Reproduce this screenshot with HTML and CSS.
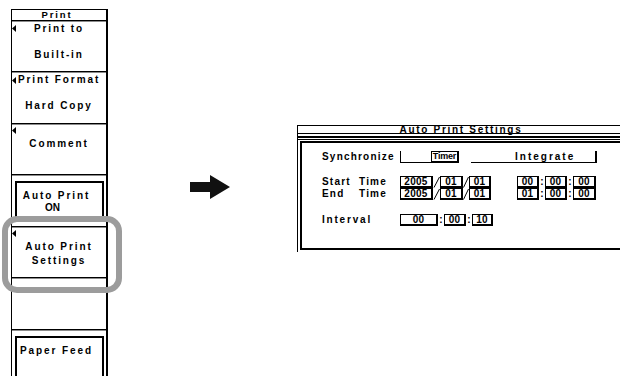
FILE: index.html
```html
<!DOCTYPE html>
<html>
<head>
<meta charset="utf-8">
<title>Auto Print Settings</title>
<link rel="stylesheet" href="styles.css">
</head>
<body>
<div class="page">
  <div class="menu">
    <div class="menu-title">Print</div>
    <div class="soft">
      <div class="l1"><svg class="tri" width="5" height="7" viewBox="0 0 5 7"><polygon points="0,3.5 4,0 4,7"/></svg><span>Print to</span></div>
      <div class="l2">Built-in</div>
    </div>
    <div class="soft">
      <div class="l1"><svg class="tri" width="5" height="7" viewBox="0 0 5 7"><polygon points="0,3.5 4,0 4,7"/></svg><span>Print Format</span></div>
      <div class="l2">Hard Copy</div>
    </div>
    <div class="soft marked">
      <svg class="tri" width="5" height="7" viewBox="0 0 5 7"><polygon points="0,3.5 4,0 4,7"/></svg>
      <div class="lbl">Comment</div>
    </div>
    <div class="soft">
      <div class="raised"><div>Auto Print</div><div class="on">ON</div></div>
    </div>
    <div class="soft marked">
      <svg class="tri" width="5" height="7" viewBox="0 0 5 7"><polygon points="0,3.5 4,0 4,7"/></svg>
      <div class="lbl">Auto Print</div>
      <div class="lbl second">Settings</div>
    </div>
    <div class="soft"></div>
    <div class="soft">
      <div class="raised tall"><div>Paper Feed</div></div>
    </div>
  </div>

  <svg class="arrow" width="40" height="24" viewBox="0 0 40 24"><polygon points="0,7 20,7 20,0 40,12 20,24 20,17 0,17"/></svg>

  <div class="dialog">
    <div class="dlg-title">Auto Print Settings</div>
    <div class="dlg-rule"></div>
    <div class="dlg-body">
      <div class="row">
        <span class="label">Synchronize</span>
        <span class="opt-left"></span><span class="opt-sel">Timer</span>
        <span class="opt-right">Integrate</span>
      </div>
      <div class="times">
        <div class="row">
          <span class="label"><span class="word">Start</span>Time</span>
          <span class="f w33">2005</span><svg class="slash" width="7" height="12" viewBox="0 0 7 12"><line x1="1" y1="11.5" x2="6.5" y2="1"/></svg><span class="f w23">01</span><svg class="slash" width="6" height="12" viewBox="0 0 6 12"><line x1="0.5" y1="11.5" x2="5.5" y2="1"/></svg><span class="f w22">01</span>
          <span class="f w22 gap">00</span><span class="colon">:</span><span class="f w22">00</span><span class="colon">:</span><span class="f w23">00</span>
        </div>
        <div class="row">
          <span class="label"><span class="word">End</span>Time</span>
          <span class="f w33">2005</span><svg class="slash" width="7" height="12" viewBox="0 0 7 12"><line x1="1" y1="11.5" x2="6.5" y2="1"/></svg><span class="f w23">01</span><svg class="slash" width="6" height="12" viewBox="0 0 6 12"><line x1="0.5" y1="11.5" x2="5.5" y2="1"/></svg><span class="f w22">01</span>
          <span class="f w22 gap">01</span><span class="colon">:</span><span class="f w22">00</span><span class="colon">:</span><span class="f w23">00</span>
        </div>
      </div>
      <div class="row interval">
        <span class="label">Interval</span>
        <span class="f w38">00</span><span class="colon">:</span><span class="f w22">00</span><span class="colon">:</span><span class="f w21">10</span>
      </div>
    </div>
  </div>

  <div class="focus"></div>
</div>
</body>
</html>
```

FILE: styles.css
```css
* { box-sizing: border-box; }

html, body {
  margin: 0;
  padding: 0;
  background: #fff;
}

body {
  width: 620px;
  height: 376px;
  overflow: hidden;
  font-family: "Liberation Sans", Arial, sans-serif;
  font-weight: bold;
  font-size: 10px;
  color: #000;
}

.page {
  position: relative;
  display: flex;
  align-items: flex-start;
  width: 620px;
  height: 376px;
}

/* ---------- soft-key menu ---------- */
.menu {
  flex: none;
  margin: 9px 0 0 11px;
  width: 97px;
  height: 380px;
  border: 1px solid #000;
  border-right-width: 2px;
  border-bottom: 0;
  display: flex;
  flex-direction: column;
  letter-spacing: 1.9px;
}

.menu-title {
  flex: none;
  height: 10.5px;
  border-bottom: 1px solid #000;
  line-height: 9px;
  font-size: 9.5px;
  text-align: center;
  padding-right: 4px;
}

.soft {
  flex: none;
  height: 51.5px;
  border-top: 1px solid #8c8c8c;
  border-bottom: 1px solid #000;
  padding-right: 4px;
  display: flex;
  flex-direction: column;
}

.tri { display: block; fill: #000; }

.l1 {
  display: grid;
  margin-top: 1px;
  line-height: 12px;
}
.l1 > * { grid-area: 1 / 1; }
.l1 .tri { justify-self: start; align-self: center; }
.l1 span { justify-self: center; padding-left: 4px; }

.l2 {
  margin-top: 14px;
  line-height: 12px;
  text-align: center;
  padding-left: 4px;
}

.marked .tri { margin-top: 2px; }
.lbl {
  line-height: 14px;
  text-align: center;
  padding-left: 4px;
}
.marked .tri + .lbl { margin-top: 3.5px; }

.raised {
  margin: 5px -2px 0 3px;
  height: 40px;
  border: 2px solid #000;
  padding: 7px 6px 0 0;
  line-height: 12px;
  text-align: center;
}
.raised.tall { height: 60px; }
.raised .on { letter-spacing: 0; padding-right: 8px; }

/* ---------- arrow ---------- */
.arrow {
  flex: none;
  margin: 175px 0 0 82px;
  fill: #111;
}

/* ---------- dialog ---------- */
.dialog {
  flex: none;
  margin: 125px 0 0 67px;
  width: 323px;
  border-top: 1px solid #000;
  border-left: 1px solid #000;
  padding-bottom: 2px;
}

.dlg-title {
  height: 8px;
  border-bottom: 1px solid #000;
  text-align: center;
  line-height: 7px;
  letter-spacing: 1.7px;
  padding-left: 4px;
}

.dlg-rule {
  margin-top: 2px;
  height: 4px;
  border-top: 2px solid #000;
  border-bottom: 1px solid #000;
}

.dlg-body {
  margin: 1px 0 0 2px;
  height: 109px;
  border: 2px solid #000;
  border-right: 0;
  padding: 8px 0 0 20px;
  letter-spacing: 1.6px;
}

.row {
  display: flex;
  align-items: flex-end;
  height: 12px;
}

.label {
  flex: none;
  width: 78px;
  line-height: 12px;
  display: flex;
  letter-spacing: 1.2px;
}
.label .word { width: 37px; }
.interval .label { letter-spacing: 1.8px; }

.opt-left {
  width: 31px;
  height: 12px;
  border-left: 1px solid #000;
  border-bottom: 1px solid #000;
}
.opt-sel {
  width: 28px;
  height: 12px;
  border: 1px solid #000;
  border-right-width: 2px;
  border-bottom-width: 2px;
  line-height: 9px;
  letter-spacing: -0.2px;
  font-size: 9px;
  text-align: center;
  white-space: nowrap;
}
.opt-right {
  margin-left: 12px;
  width: 126px;
  height: 12px;
  border-bottom: 1px solid #000;
  border-right: 2px solid #000;
  padding-left: 44px;
  line-height: 11px;
  letter-spacing: 2px;
}

.times { margin-top: 13px; }

.f {
  flex: none;
  height: 12px;
  border: 1px solid #000;
  border-right-width: 2px;
  border-bottom-width: 2px;
  line-height: 9px;
  text-align: center;
  letter-spacing: 0.3px;
}
.w21 { width: 21px; }
.w22 { width: 22px; }
.w23 { width: 23px; }
.w33 { width: 33px; }
.w38 { width: 38px; }
.gap { margin-left: 26px; }

.slash { flex: none; display: block; stroke: #000; stroke-width: 1; }

.colon {
  flex: none;
  width: 6px;
  line-height: 12px;
  text-align: center;
  letter-spacing: 0;
}

.interval { margin-top: 14px; }

/* ---------- highlight ring ---------- */
.focus {
  position: absolute;
  left: 2px;
  top: 216px;
  width: 120px;
  height: 77px;
  border: 6px solid #9c9c9c;
  border-radius: 15px;
}
```
